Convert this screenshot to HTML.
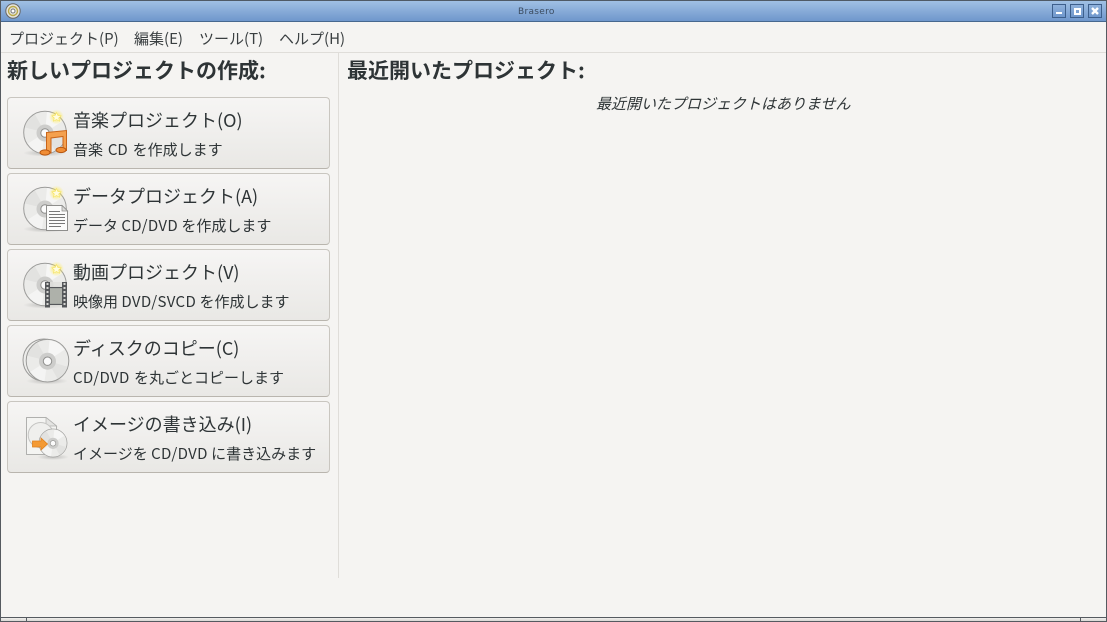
<!DOCTYPE html>
<html lang="ja">
<head>
<meta charset="utf-8">
<title>Brasero</title>
<style>
html,body{margin:0;padding:0;width:1107px;height:622px;overflow:hidden;background:#f5f4f2}
body{position:relative;font-family:"Noto Sans CJK JP","Liberation Sans",sans-serif;color:#2e3436}
.a{position:absolute;white-space:nowrap;line-height:1}
#tb{position:absolute;left:0;top:0;width:1107px;height:22px;box-sizing:border-box;background:linear-gradient(#a0c0e4,#6f97cc);border-top:1px solid #4f5a66;border-bottom:1px solid #47688f}
.wb{position:absolute;top:4px;width:14px;height:14px;box-sizing:border-box;border:1px solid #3d5f8c;background:linear-gradient(#8fb1dc,#6f97cc)}
.btn{position:absolute;left:7px;width:323px;height:72px;box-sizing:border-box;border:1px solid #c9c6c0;border-bottom-color:#b9b5ae;border-radius:4px;background:linear-gradient(#f6f5f4,#e9e8e5)}
.t{font-size:18px;left:73px;color:#2e3436}
.s{font-size:15px;left:73px;color:#2e3436}
.s span{letter-spacing:.35px}
.h{font-size:21px;font-weight:700;color:#2e3436}
.m{font-size:15px;top:31px;color:#3a3f41}
.ic{position:absolute;left:22px;width:46px;height:48px;overflow:visible}
</style>
</head>
<body>
<div id="tb"></div>
<svg class="a" style="left:5px;top:3px" width="16" height="16" viewBox="0 0 16 16"><circle cx="8" cy="8" r="7.2" fill="#e4e3dc" stroke="#666"/><circle cx="8" cy="8" r="4.5" fill="none" stroke="#b9a94a" stroke-width="1.4"/><circle cx="8" cy="8" r="2" fill="#fff" stroke="#777"/></svg>
<div class="a" style="left:518px;top:8px;font-size:9px;color:#3c4c60;letter-spacing:.3px;font-family:'DejaVu Sans',sans-serif">Brasero</div>
<div class="wb" style="left:1052px"><div style="position:absolute;left:3px;top:7px;width:6px;height:2px;background:#fff"></div></div>
<div class="wb" style="left:1070px"><div style="position:absolute;left:3px;top:3px;width:7px;height:7px;box-sizing:border-box;border:2px solid #fff"></div></div>
<div class="wb" style="left:1088px"><svg style="position:absolute;left:1px;top:1px" width="10" height="10"><path d="M2 2L8 8M8 2L2 8" stroke="#fff" stroke-width="2.4"/></svg></div>

<div class="a m" style="left:9px">プロジェクト(P)</div>
<div class="a m" style="left:134px">編集(E)</div>
<div class="a m" style="left:199px">ツール(T)</div>
<div class="a m" style="left:279px">ヘルプ(H)</div>
<div class="a" style="left:1px;top:52px;width:1105px;height:1px;background:#dfddd9"></div>

<div class="a h" style="left:7px;top:60px">新しいプロジェクトの作成:</div>
<div class="a h" style="left:347px;top:60px">最近開いたプロジェクト:</div>
<div class="a" style="left:338px;top:53px;width:1px;height:525px;background:#dfddd9"></div>
<div class="a" style="left:596px;top:96px;font-size:15px;font-style:italic;color:#2e3436">最近開いたプロジェクトはありません</div>

<svg width="0" height="0" style="position:absolute">
<defs>
<radialGradient id="sh" cx=".5" cy=".5" r=".5"><stop offset="0" stop-color="#000" stop-opacity=".2"/><stop offset="1" stop-color="#000" stop-opacity="0"/></radialGradient>
<radialGradient id="st" cx=".5" cy=".5" r=".5"><stop offset="0" stop-color="#ffe94a" stop-opacity=".95"/><stop offset="1" stop-color="#ffe94a" stop-opacity="0"/></radialGradient>
<g id="disc">
<circle cx="0" cy="0" r="21.3" fill="#ebebe9" stroke="#9c9c9a" stroke-width="1"/>
<path d="M0 0L2 -20.500A21 21 0 0 1 17 -11Z" fill="#f6f6f5"/>
<path d="M0 0L-3 20.500A21 21 0 0 1 -17 11Z" fill="#f4f4f3"/>
<path d="M0 0L-20 -5A21 21 0 0 1 -10 -18Z" fill="#e2e2e0"/>
<path d="M0 0L20 6A21 21 0 0 1 10 18Z" fill="#e2e2e0"/>
<circle cx="0" cy="0.500" r="8.500" fill="#cdcdcb"/>
<circle cx="0" cy="0.500" r="4.200" fill="#fbfbfb" stroke="#8f8f8d" stroke-width="1"/>
</g>
<g id="star">
<circle cx="34.500" cy="9" r="7.500" fill="url(#st)"/>
<path d="M34.500 4.500l1.400 3 3.200.3-2.400 2.200.8 3.200-3-1.700-3 1.700.8-3.200-2.400-2.200 3.200-.3z" fill="#fffce0" stroke="#f5e25a" stroke-width=".6"/>
</g>
</defs>
</svg>

<div class="btn" style="top:97px"></div>
<svg class="ic" style="top:108px" viewBox="0 0 46 48">
<ellipse cx="23" cy="45" rx="22" ry="3.500" fill="url(#sh)"/>
<use href="#disc" x="23" y="24.500"/>
<use href="#star"/>
<path d="M24.500 24.500L44.500 22.500V42.500H41V28.500L29 30V45H24.500Z" fill="#f4a04e" stroke="#c9651a" stroke-width="1"/>
<ellipse cx="23" cy="44.500" rx="5" ry="2.600" fill="#f08d35" stroke="#b7560f"/>
<ellipse cx="39" cy="42" rx="5" ry="2.600" fill="#f08d35" stroke="#b7560f"/>
</svg>
<div class="a t" style="top:111px">音楽プロジェクト(O)</div>
<div class="a s" style="top:142px;word-spacing:1.500px">音楽 CD を作成します</div>

<div class="btn" style="top:173px"></div>
<svg class="ic" style="top:184px" viewBox="0 0 46 48">
<ellipse cx="23" cy="45" rx="22" ry="3.500" fill="url(#sh)"/>
<use href="#disc" x="23" y="24.500"/>
<use href="#star"/>
<path d="M24.500 21.500H40L45.500 27V46.500H24.500Z" fill="#fbfbfa" stroke="#8e8e8c"/>
<path d="M40 21.500V27H45.500Z" fill="#dcdcda" stroke="#8e8e8c" stroke-width=".7"/>
<path d="M27 27.500H38M27 30.500H43M27 33.500H43M27 36.500H43M27 39.500H43M27 42.500H39" stroke="#777" stroke-width=".9"/>
</svg>
<div class="a t" style="top:187px">データプロジェクト(A)</div>
<div class="a s" style="top:218px">データ <span>CD/DVD</span> を作成します</div>

<div class="btn" style="top:249px"></div>
<svg class="ic" style="top:260px" viewBox="0 0 46 48">
<ellipse cx="23" cy="45" rx="22" ry="3.500" fill="url(#sh)"/>
<use href="#disc" x="23" y="24.500"/>
<use href="#star"/>
<rect x="23" y="22" width="5" height="25.500" fill="#55575a"/>
<rect x="40" y="22" width="5" height="25.500" fill="#55575a"/>
<path d="M25.500 23V47M42.500 23V47" stroke="#d5d5d2" stroke-width="2" stroke-dasharray="2 2"/>
<rect x="28" y="28" width="12" height="16" fill="#aeb1aa"/>
<path d="M28 27.500H40M28 44.500H40" stroke="#55575a" stroke-width="1.200"/>
<rect x="28" y="22" width="12" height="5" fill="#e0e0dc" opacity=".8"/>
<rect x="28" y="45" width="12" height="2.500" fill="#e0e0dc" opacity=".8"/>
</svg>
<div class="a t" style="top:263px">動画プロジェクト(V)</div>
<div class="a s" style="top:294px">映像用 <span>DVD/SVCD</span> を作成します</div>

<div class="btn" style="top:325px"></div>
<svg class="ic" style="top:336px" viewBox="0 0 46 48">
<ellipse cx="25" cy="45" rx="21" ry="3.500" fill="url(#sh)"/>
<circle cx="22" cy="24" r="21" fill="#ececea" stroke="#9a9a98"/>
<use href="#disc" x="25.500" y="24.700"/>
</svg>
<div class="a t" style="top:339px">ディスクのコピー(C)</div>
<div class="a s" style="top:370px;word-spacing:1px"><span>CD/DVD</span> を丸ごとコピーします</div>

<div class="btn" style="top:401px"></div>
<svg class="ic" style="top:412px" viewBox="0 0 46 48">
<ellipse cx="31" cy="45" rx="16" ry="3" fill="url(#sh)"/>
<path d="M4.500 5.500H24L34.500 14V42.500H4.500Z" fill="#f4f4f2" stroke="#b0b0ae" stroke-linejoin="round"/>
<path d="M24 5.500V14H34.500Z" fill="#e4e4e2" stroke="#b0b0ae" stroke-width=".7"/>
<circle cx="18.700" cy="23" r="12.500" fill="#efefed" stroke="#c4c4c2"/>
<g transform="translate(31,31) scale(.66)"><use href="#disc"/></g>
<path d="M10.500 29H19V26L25.500 32L19 38V35H10.500Z" fill="#f49a34" stroke="#e0801c" stroke-width=".8"/>
</svg>
<div class="a t" style="top:415px">イメージの書き込み(I)</div>
<div class="a s" style="top:446px">イメージを <span>CD/DVD</span> に書き込みます</div>

<div class="a" style="left:1px;top:617px;width:1105px;height:1px;background:#555a60"></div>
<div class="a" style="left:1px;top:618px;width:1105px;height:3px;background:linear-gradient(#f0efed,#d8d7d4)"></div>
<div class="a" style="left:0;top:621px;width:1107px;height:1px;background:#555a60"></div>
<div class="a" style="left:26px;top:617px;width:1px;height:5px;background:#555a60"></div>
<div class="a" style="left:1080px;top:617px;width:1px;height:5px;background:#555a60"></div>
<div class="a" style="left:0;top:0;width:1px;height:622px;background:#555a60"></div>
<div class="a" style="left:1106px;top:0;width:1px;height:622px;background:#555a60"></div>
</body>
</html>
